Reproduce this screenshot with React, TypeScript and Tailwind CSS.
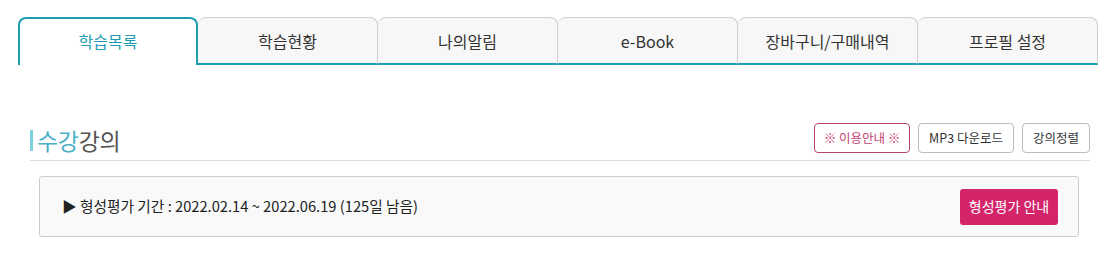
import { useState } from "react";

const tabs = ["학습목록", "학습현황", "나의알림", "e-Book", "장바구니/구매내역", "프로필 설정"];

export default function App() {
  const [active, setActive] = useState(0);

  return (
    <div className="w-[1108px] h-[254px] bg-white font-['Noto_Sans_CJK_KR',sans-serif] text-[#333]">
      {/* Tabs */}
      <div className="flex pl-[18px] pt-[17px]">
        {tabs.map((label, i) =>
          i === active ? (
            <button
              key={label}
              onClick={() => setActive(i)}
              className="w-[180px] h-[48px] rounded-t-[8px] border-2 border-b-0 border-[#1e9cb2] bg-white text-[16px] text-[#1e9cb2] pb-[2px]"
            >
              {label}
            </button>
          ) : (
            <button
              key={label}
              onClick={() => setActive(i)}
              className="w-[180px] h-[48px] rounded-t-[8px] border-t border-r border-[#cfcfcf] border-b-2 border-b-[#1e9cb2] bg-[#f7f7f7] text-[16px] text-[#333]"
            >
              {label}
            </button>
          )
        )}
      </div>

      {/* Section */}
      <div className="ml-[30px] w-[1060px] mt-[58px]">
        <div className="flex items-end justify-between border-b border-[#dcdcdc] pb-[7px]">
          <div className="flex items-center gap-[4px] mb-[-2px]">
            <span className="block w-[3px] h-[21px] bg-[#7cd0e2]" />
            <h2 className="text-[23px] leading-[30px] tracking-[-0.3px]">
              <span className="text-[#4ab0c8]">수강</span>
              <span className="text-[#555]">강의</span>
            </h2>
          </div>
          <div className="flex gap-[8px]">
            <button className="h-[30px] w-[96px] rounded-[4px] border border-[#b9456f] bg-white text-[12.5px] text-[#c44474]">
              ※ 이용안내 ※
            </button>
            <button className="h-[30px] w-[96px] rounded-[4px] border border-[#bdbdbd] bg-white text-[12.5px] text-[#333]">
              MP3 다운로드
            </button>
            <button className="h-[30px] w-[68px] rounded-[4px] border border-[#bdbdbd] bg-white text-[12.5px] text-[#333]">
              강의정렬
            </button>
          </div>
        </div>

        <div className="mt-[15px] ml-[9px] w-[1040px] h-[61px] flex items-center justify-between rounded-[3px] border border-[#cdcdcd] bg-[#f9f9f9] pl-[22px] pr-[20px]">
          <p className="text-[14.7px] text-[#222]">
            ▶ 형성평가 기간 : 2022.02.14 ~ 2022.06.19 (125일 남음)
          </p>
          <button className="h-[36px] w-[98px] rounded-[3px] bg-[#d4246a] text-[14px] text-white">
            형성평가 안내
          </button>
        </div>
      </div>
    </div>
  );
}
